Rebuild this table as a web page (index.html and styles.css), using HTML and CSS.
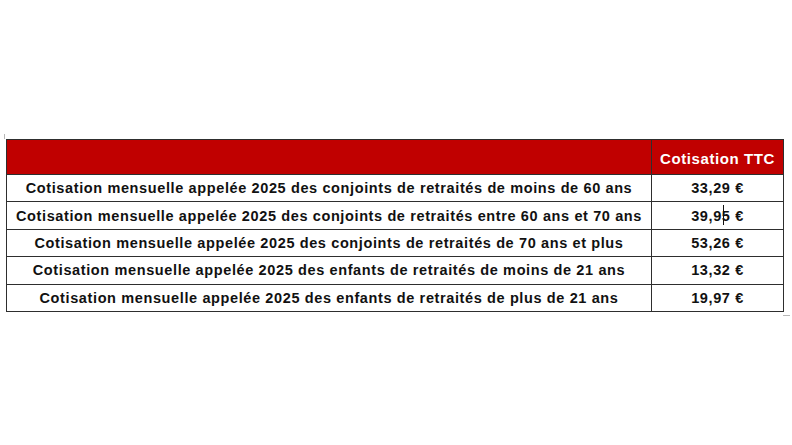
FILE: index.html
```html
<!DOCTYPE html>
<html lang="fr">
<head>
<meta charset="utf-8">
<link rel="stylesheet" href="styles.css">
</head>
<body>
<div class="page">
  <span class="mark mark-tl"></span>
  <table class="tarifs">
    <colgroup><col class="c-label"><col class="c-val"></colgroup>
    <thead>
      <tr class="head"><th></th><th>Cotisation TTC</th></tr>
    </thead>
    <tbody>
      <tr><td>Cotisation mensuelle appelée 2025 des conjoints de retraités de moins de 60 ans</td><td class="val">33,29 €</td></tr>
      <tr><td>Cotisation mensuelle appelée 2025 des conjoints de retraités entre 60 ans et 70 ans</td><td class="val"><span class="caretwrap">39,9<span class="caret"></span>5 €</span></td></tr>
      <tr><td>Cotisation mensuelle appelée 2025 des conjoints de retraités de 70 ans et plus</td><td class="val">53,26 €</td></tr>
      <tr><td>Cotisation mensuelle appelée 2025 des enfants de retraités de moins de 21 ans</td><td class="val">13,32 €</td></tr>
      <tr><td>Cotisation mensuelle appelée 2025 des enfants de retraités de plus de 21 ans</td><td class="val">19,97 €</td></tr>
    </tbody>
  </table>
  <span class="mark mark-br"></span>
</div>
</body>
</html>
```
FILE: styles.css
```css
html, body {
  margin: 0;
  padding: 0;
  background: #ffffff;
}
body {
  width: 792px;
  height: 445px;
  overflow: hidden;
  font-family: "Liberation Sans", Arial, sans-serif;
}
.page {
  position: relative;
  padding: 139px 0 0 6px;
}
.tarifs {
  border-collapse: collapse;
  width: 777px;
  table-layout: fixed;
  color: #111;
}
.c-label { width: 645px; }
.c-val { width: 132px; }
.tarifs th, .tarifs td {
  border: 1px solid #2e2e2e;
  padding: 0;
  text-align: center;
  font-weight: bold;
  font-size: 14.5px;
  letter-spacing: 0.62px;
  white-space: nowrap;
}
.head th {
  background: #c00000;
  color: #ffffff;
  height: 32px;
  font-size: 15px;
  letter-spacing: 0.6px;
  padding-top: 2px;
}
.tarifs td {
  height: 26.4px;
}
.caretwrap { position: relative; }
.caret {
  position: absolute;
  left: 32px;
  top: -3px;
  width: 1px;
  height: 20px;
  background: #111;
}
.mark {
  position: absolute;
  background: #b8b8b8;
}
.mark-tl {
  left: 4px;
  top: 134px;
  width: 1px;
  height: 5px;
}
.mark-br {
  left: 783px;
  top: 315px;
  width: 7px;
  height: 1px;
}
```
